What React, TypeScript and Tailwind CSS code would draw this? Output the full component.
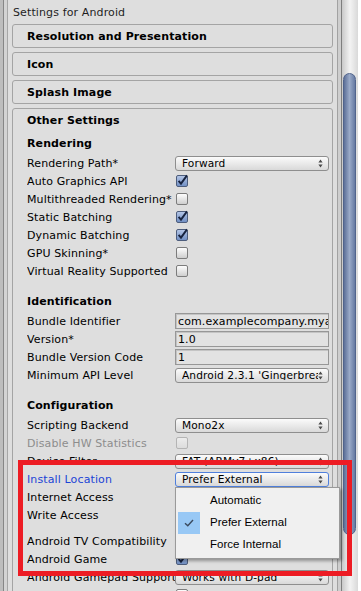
import React from "react";

const ui = "font-['DejaVu_Sans',sans-serif]";

function UpDown() {
  return (
    <svg width="5" height="9" viewBox="0 0 5 9" className="shrink-0">
      <path d="M2.5 0.5 L4.6 3.4 H0.4 Z M2.5 8.5 L4.6 5.6 H0.4 Z" fill="#4a4a4a" />
    </svg>
  );
}

function Dropdown({ value, focused }: { value: string; focused?: boolean }) {
  return (
    <div
      className={`h-[15px] w-[154px] rounded-[3px] border ${
        focused ? "border-[#4f7fdc]" : "border-[#8e8e8e]"
      } bg-gradient-to-b from-[#fbfbfb] to-[#d9d9d9] flex items-center pl-[6px] pr-[5px] text-[10.6px] leading-none overflow-hidden`}
    >
      <span className="flex-1 whitespace-nowrap overflow-hidden">{value}</span>
      <UpDown />
    </div>
  );
}

function TextField({ value }: { value: string }) {
  return (
    <div className="h-[16px] w-[154px] border border-[#979797] bg-[#e2e2e2] shadow-[inset_1px_1px_0_#c4c4c4] flex items-center pl-[2px] text-[11px] leading-none whitespace-nowrap overflow-hidden">
      {value}
    </div>
  );
}

function Check({ on, disabled }: { on?: boolean; disabled?: boolean }) {
  if (on) {
    return (
      <div className="ml-[1px] w-[12px] h-[12px] rounded-[2px] border border-[#4d5d7c] bg-gradient-to-b from-[#b3c5e6] to-[#7290c4] relative">
        <svg width="12" height="12" viewBox="0 0 12 12" className="absolute -left-[1px] -top-[2px] overflow-visible">
          <path d="M2.6 6.8 L5 9.6 L11 1.4" fill="none" stroke="#17233f" strokeWidth="1.9" />
        </svg>
      </div>
    );
  }
  return (
    <div
      className={`ml-[1px] w-[12px] h-[12px] rounded-[2px] border ${
        disabled ? "border-[#b4b4b4] from-[#ececec] to-[#dcdcdc]" : "border-[#7c7c7c] from-[#fdfdfd] to-[#cfcfcf]"
      } bg-gradient-to-b`}
    />
  );
}

function Row({
  label,
  children,
  tone = "text-black",
}: {
  label: string;
  children?: React.ReactNode;
  tone?: string;
}) {
  return (
    <div className="h-[18px] flex items-center">
      <div className={`w-[148px] shrink-0 whitespace-nowrap overflow-hidden text-[11px] leading-none ${tone}`}>
        {label}
      </div>
      {children}
    </div>
  );
}

function Heading({ title, className = "" }: { title: string; className?: string }) {
  return (
    <div className={`h-[18px] mb-[2px] flex items-center text-[11px] font-bold leading-none ${className}`}>
      {title}
    </div>
  );
}

function Foldout({ title }: { title: string }) {
  return (
    <div className="h-[24px] mb-[4px] mx-[4px] rounded-[3px] border border-[#a4a4a4] flex items-center pl-[14px] text-[11px] font-bold leading-none">
      {title}
    </div>
  );
}

export default function App() {
  return (
    <div className={`relative w-[361px] h-[591px] overflow-hidden flex items-start bg-[#dedede] text-black tracking-[0.12px] ${ui}`}>
      {/* left window frame */}
      <div className="flex shrink-0 self-stretch">
        <div className="w-[3px] bg-[#bdbdbd]" />
        <div className="w-[1px] bg-[#868686]" />
        <div className="w-[3px] bg-[#d3d3d3]" />
        <div className="w-[1px] bg-[#a6a6a6]" />
      </div>

      {/* inspector content */}
      <div className="w-[329px] shrink-0">
        <div className="h-[24px] flex items-center pl-[5px] text-[11px] leading-none text-[#1e1e1e]">
          Settings for Android
        </div>
        <Foldout title="Resolution and Presentation" />
        <Foldout title="Icon" />
        <Foldout title="Splash Image" />

        <div className="mx-[4px] rounded-[3px] border border-[#a4a4a4]">
          <div className="h-[23px] flex items-center pl-[14px] text-[11px] font-bold leading-none">
            Other Settings
          </div>
          <div className="pl-[14px] pt-[2px]">
            <Heading title="Rendering" />
            <Row label="Rendering Path*">
              <Dropdown value="Forward" />
            </Row>
            <Row label="Auto Graphics API">
              <Check on />
            </Row>
            <Row label="Multithreaded Rendering*">
              <Check />
            </Row>
            <Row label="Static Batching">
              <Check on />
            </Row>
            <Row label="Dynamic Batching">
              <Check on />
            </Row>
            <Row label="GPU Skinning*">
              <Check />
            </Row>
            <Row label="Virtual Reality Supported">
              <Check />
            </Row>

            <Heading title="Identification" className="mt-[12px]" />
            <Row label="Bundle Identifier">
              <TextField value="com.examplecompany.myapp" />
            </Row>
            <Row label="Version*">
              <TextField value="1.0" />
            </Row>
            <Row label="Bundle Version Code">
              <TextField value="1" />
            </Row>
            <Row label="Minimum API Level">
              <Dropdown value="Android 2.3.1 'Gingerbread' (API level 9)" />
            </Row>

            <Heading title="Configuration" className="mt-[12px]" />
            <Row label="Scripting Backend">
              <Dropdown value="Mono2x" />
            </Row>
            <Row label="Disable HW Statistics" tone="text-[#8d8d8d]">
              <Check disabled />
            </Row>
            <Row label="Device Filter">
              <Dropdown value="FAT (ARMv7+x86)" />
            </Row>
            <Row label="Install Location" tone="text-[#1b44d6]">
              <Dropdown value="Prefer External" focused />
            </Row>
            <Row label="Internet Access">
              <Dropdown value="Auto" />
            </Row>
            <Row label="Write Access">
              <Dropdown value="Internal Only" />
            </Row>
            <div className="h-[8px]" />
            <Row label="Android TV Compatibility">
              <Check on />
            </Row>
            <Row label="Android Game">
              <Check on />
            </Row>
            <Row label="Android Gamepad Support Level">
              <Dropdown value="Works with D-pad" />
            </Row>
            <Row label="Protect Graphics Memory">
              <Check />
            </Row>
          </div>
        </div>
      </div>

      {/* separator and scrollbar */}
      <div className="w-[1px] shrink-0 self-stretch bg-[#a2a2a2]" />
      <div className="w-[3px] shrink-0 self-stretch bg-[#cecece]" />
      <div className="w-[1px] shrink-0 self-stretch bg-[#7e7e7e]" />
      <div className="w-[16px] shrink-0 self-stretch bg-gradient-to-r from-[#c9c9c9] via-[#f3f3f3] to-[#d9d9d9] pt-[73px] pl-[1px]">
        <div className="w-[13px] h-[462px] rounded-full border border-[#51648c] bg-gradient-to-r from-[#5d7098] via-[#9aaac8] to-[#667aa2]" />
      </div>
      <div className="w-[3px] shrink-0 self-stretch bg-white" />

      {/* popup menu */}
      <div className="absolute left-[175px] top-[487px] w-[165px] h-[72px] border border-[#9a9a9a] bg-[#f0f0f0] shadow-[2px_2px_3px_rgba(0,0,0,0.35)] py-[2px] font-['Liberation_Sans',Arial,sans-serif] text-[11.5px] tracking-normal leading-none">
        {["Automatic", "Prefer External", "Force Internal"].map((item) => (
          <div key={item} className="h-[22px] flex items-center">
            <div
              className={`ml-[2px] w-[22px] h-[22px] flex items-center justify-center ${
                item === "Prefer External" ? "bg-[#98c8f5]" : ""
              }`}
            >
              {item === "Prefer External" && (
                <svg width="10" height="8" viewBox="0 0 10 8">
                  <path d="M1 4.2 L3.8 6.8 L9 1" fill="none" stroke="#3a4a5e" strokeWidth="1.4" />
                </svg>
              )}
            </div>
            <span className="ml-[10px] whitespace-nowrap">{item}</span>
          </div>
        ))}
      </div>

      {/* annotation */}
      <div className="absolute left-[18px] top-[460px] w-[334px] h-[116px] border-[5px] border-[#ed1c24]" />
    </div>
  );
}
